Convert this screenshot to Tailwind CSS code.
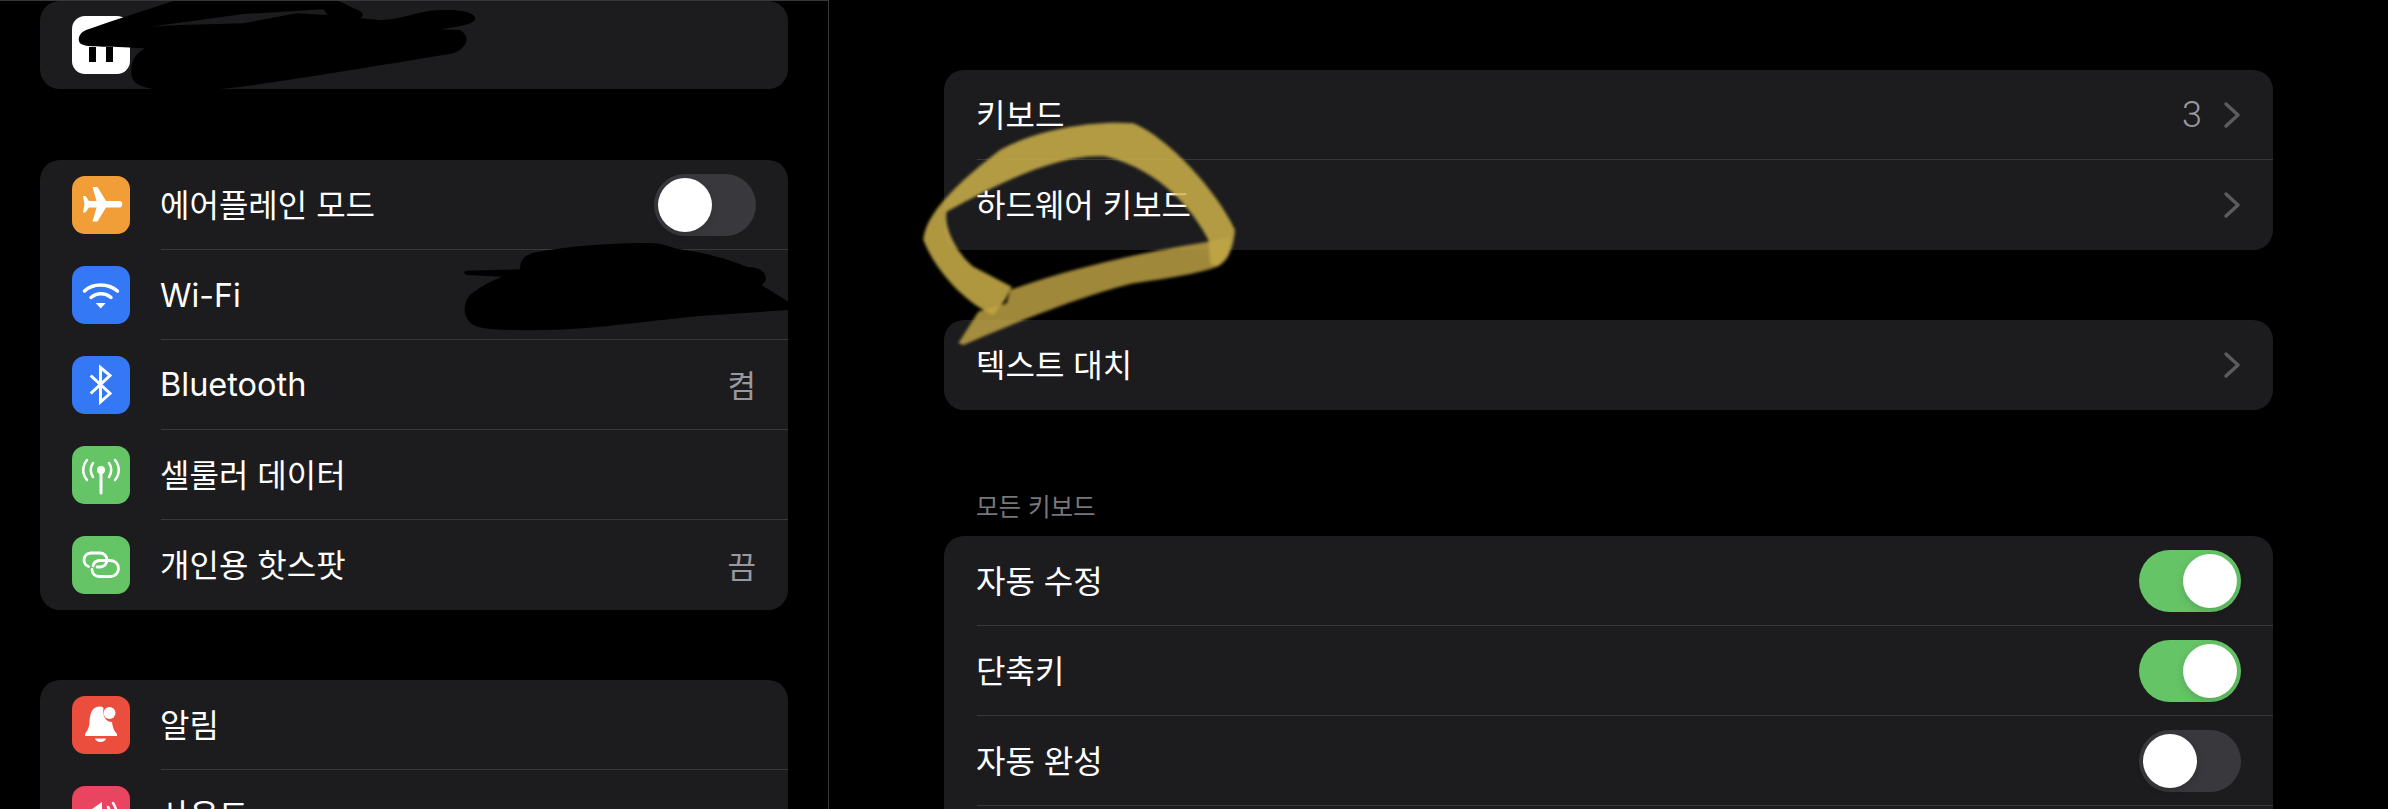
<!DOCTYPE html>
<html lang="ko">
<head>
<meta charset="utf-8">
<title>설정</title>
<script src="https://cdn.jsdelivr.net/npm/@tailwindcss/browser@4"></script>
</head>
<body class="bg-black">
<div class="relative flex w-[2388px] h-[809px] overflow-hidden bg-black text-white text-[32px] leading-none font-['Noto_Sans_CJK_KR','Noto_Sans',sans-serif]">

  <!-- sidebar -->
  <aside class="w-[829px] h-full shrink-0 border-r border-t border-[#38383a] pl-[40px] pr-[40px]">
    <div class="h-[88px] rounded-[20px] bg-[#1c1c1e] flex items-center pl-[32px]">
      <svg class="w-[58px] h-[58px] mt-[-1px]" viewBox="0 0 58 58"><rect width="58" height="58" rx="13" fill="#fff"/><rect x="17" y="31" width="7" height="15" fill="#000"/><rect x="34" y="31" width="7" height="15" fill="#000"/></svg>
    </div>

    <div class="mt-[71px] rounded-[20px] bg-[#1c1c1e] overflow-hidden">
      <div class="h-[90px] flex pl-[32px]">
        <svg class="w-[58px] h-[58px] mt-[16px] shrink-0" viewBox="0 0 58 58"><rect width="58" height="58" rx="13" fill="#f19e39"/><path d="M48 25H34L25.500 11H20.500L24.500 25H17L13.500 20H11L12.500 28.300 11 36.500H13.500L17 31.500H24.500L20.500 45.500H25.500L34 31.500H48C51 31 51 25.500 48 25Z" fill="#fff"/></svg>
        <div class="flex-1 ml-[31px] border-b border-[#38383a] flex items-center justify-between pr-[32px]">
          <span class="-ml-px mb-[4px]">에어플레인 모드</span>
          <div class="w-[102px] h-[62px] rounded-full bg-[#39393d] flex items-center pl-[4px]"><div class="w-[54px] h-[54px] rounded-full bg-white shadow-[0_3px_8px_rgba(0,0,0,0.15)]"></div></div>
        </div>
      </div>
      <div class="h-[90px] flex pl-[32px]">
        <svg class="w-[58px] h-[58px] mt-[16px] shrink-0" viewBox="0 0 58 58"><rect width="58" height="58" rx="13" fill="#3478f6"/><path d="M12.500 25C21 17 36 17 45.500 25" fill="none" stroke="#fff" stroke-width="3.500" stroke-linecap="round"/><path d="M19 31.500C25 26.500 33 26.500 39 31.500" fill="none" stroke="#fff" stroke-width="3.500" stroke-linecap="round"/><path d="M23.700 37H33.700L28.700 42.500Z" fill="#fff"/></svg>
        <div class="flex-1 ml-[31px] border-b border-[#38383a] flex items-center justify-between pr-[32px]">
          <span class="font-['Inter',sans-serif] text-[32px] -ml-px mt-[2px]">Wi-Fi</span>
        </div>
      </div>
      <div class="h-[90px] flex pl-[32px]">
        <svg class="w-[58px] h-[58px] mt-[16px] shrink-0" viewBox="0 0 58 58"><rect width="58" height="58" rx="13" fill="#3478f6"/><path d="M18.700 19.500L38 37.500L28.500 46V11.500L38 19.500L18.700 37.500" fill="none" stroke="#fff" stroke-width="3"/></svg>
        <div class="flex-1 ml-[31px] border-b border-[#38383a] flex items-center justify-between pr-[32px]">
          <span class="font-['Inter',sans-serif] text-[32.5px] -ml-px mt-[2px]">Bluetooth</span>
          <span class="text-[#98989e] text-[31px] mb-[2px]">켬</span>
        </div>
      </div>
      <div class="h-[90px] flex pl-[32px]">
        <svg class="w-[58px] h-[58px] mt-[16px] shrink-0" viewBox="0 0 58 58"><rect width="58" height="58" rx="13" fill="#65c466"/><circle cx="29" cy="24" r="4" fill="#fff"/><path d="M29 25V47" stroke="#fff" stroke-width="3" stroke-linecap="round"/><g fill="none" stroke="#fff" stroke-width="2.500" stroke-linecap="round"><path d="M21 17C18 21 18 27 21 31"/><path d="M37 17C40 21 40 27 37 31"/><path d="M15 14C10 20 10 28 15 34"/><path d="M43 14C48 20 48 28 43 34"/></g></svg>
        <div class="flex-1 ml-[31px] border-b border-[#38383a] flex items-center justify-between pr-[32px]">
          <span class="-ml-px mb-[4px]">셀룰러 데이터</span>
        </div>
      </div>
      <div class="h-[90px] flex pl-[32px]">
        <svg class="w-[58px] h-[58px] mt-[16px] shrink-0" viewBox="0 0 58 58"><rect width="58" height="58" rx="13" fill="#65c466"/><g fill="none" stroke="#fff" stroke-width="2.800" stroke-linecap="round"><path d="M16.500 30.500A7 7 0 0 1 18.500 17H28A7 7 0 0 1 28 31H25"/><path d="M21 30A7 7 0 0 1 27 24.500H38.500A8 8 0 0 1 38.500 40.500H27A7 7 0 0 1 20 33.500"/></g></svg>
        <div class="flex-1 ml-[31px] flex items-center justify-between pr-[32px]">
          <span class="-ml-px mb-[4px]">개인용 핫스팟</span>
          <span class="text-[#98989e] text-[31px] mb-[2px]">끔</span>
        </div>
      </div>
    </div>

    <div class="mt-[70px] rounded-t-[20px] bg-[#1c1c1e] overflow-hidden">
      <div class="h-[90px] flex pl-[32px]">
        <svg class="w-[58px] h-[58px] mt-[16px] shrink-0" viewBox="0 0 58 58"><rect width="58" height="58" rx="13" fill="#eb4e3d"/><path d="M28 10.500C20 10.500 18 17 17.500 26C17 33 15 35 13 38V40H45V38C42 35 40.500 31 40 26C34 26 30 20 31.500 12C30.500 11 29.500 10.500 28 10.500Z" fill="#fff"/><circle cx="37.500" cy="17" r="6" fill="#fff"/><path d="M23 42.500H34C33.500 47 23.500 47 23 42.500Z" fill="#fff"/></svg>
        <div class="flex-1 ml-[31px] border-b border-[#38383a] flex items-center justify-between pr-[32px]">
          <span class="-ml-px mb-[4px]">알림</span>
        </div>
      </div>
      <div class="h-[90px] flex pl-[32px]">
        <svg class="w-[58px] h-[58px] mt-[16px] shrink-0" viewBox="0 0 58 58"><rect width="58" height="58" rx="13" fill="#ea4560"/><path d="M30 16L20 23H14V35H20L30 42Z" fill="#fff"/><path d="M36 21C39 26 39 32 36 37M41 17C46 24 46 34 41 41" fill="none" stroke="#fff" stroke-width="2.500" stroke-linecap="round"/></svg>
        <div class="flex-1 ml-[31px] flex items-center justify-between pr-[32px]">
          <span class="-ml-px mb-[4px]">사운드</span>
        </div>
      </div>
    </div>
  </aside>

  <!-- detail -->
  <main class="flex-1 pl-[115px] pr-[115px] pt-[70px]">
    <div class="rounded-[20px] bg-[#1c1c1e] overflow-hidden">
      <div class="h-[90px] pl-[33px] flex">
        <div class="flex-1 border-b border-[#38383a] flex items-center justify-between pr-[32px]">
          <span class="-ml-px mb-[4px]">키보드</span>
          <div class="flex items-center gap-[21px]">
            <span class="text-[#98989e] text-[36px] font-['Roboto',sans-serif] font-light">3</span>
            <svg class="w-[18px] h-[28px]" viewBox="0 0 18 28"><path d="M3 3L15 14L3 25" fill="none" stroke="#5c5c60" stroke-width="3.500" stroke-linecap="round" stroke-linejoin="round"/></svg>
          </div>
        </div>
      </div>
      <div class="h-[90px] pl-[33px] flex">
        <div class="flex-1 flex items-center justify-between pr-[32px]">
          <span class="-ml-px mb-[4px]">하드웨어 키보드</span>
          <svg class="w-[18px] h-[28px]" viewBox="0 0 18 28"><path d="M3 3L15 14L3 25" fill="none" stroke="#5c5c60" stroke-width="3.500" stroke-linecap="round" stroke-linejoin="round"/></svg>
        </div>
      </div>
    </div>

    <div class="mt-[70px] rounded-[20px] bg-[#1c1c1e]">
      <div class="h-[90px] pl-[33px] pr-[32px] flex items-center justify-between">
        <span class="-ml-px mb-[4px]">텍스트 대치</span>
        <svg class="w-[18px] h-[28px]" viewBox="0 0 18 28"><path d="M3 3L15 14L3 25" fill="none" stroke="#5c5c60" stroke-width="3.500" stroke-linecap="round" stroke-linejoin="round"/></svg>
      </div>
    </div>

    <div class="h-[126px] flex items-end pl-[32px] pb-[18px] text-[24.5px] text-[#77777c]">모든 키보드</div>

    <div class="rounded-t-[20px] bg-[#1c1c1e] overflow-hidden">
      <div class="h-[90px] pl-[33px] flex">
        <div class="flex-1 border-b border-[#38383a] flex items-center justify-between pr-[32px]">
          <span class="-ml-px mb-[4px]">자동 수정</span>
          <div class="w-[102px] h-[62px] rounded-full bg-[#65c466] flex items-center justify-end pr-[4px]"><div class="w-[54px] h-[54px] rounded-full bg-white shadow-[0_3px_8px_rgba(0,0,0,0.15)]"></div></div>
        </div>
      </div>
      <div class="h-[90px] pl-[33px] flex">
        <div class="flex-1 border-b border-[#38383a] flex items-center justify-between pr-[32px]">
          <span class="-ml-px mb-[4px]">단축키</span>
          <div class="w-[102px] h-[62px] rounded-full bg-[#65c466] flex items-center justify-end pr-[4px]"><div class="w-[54px] h-[54px] rounded-full bg-white shadow-[0_3px_8px_rgba(0,0,0,0.15)]"></div></div>
        </div>
      </div>
      <div class="h-[90px] pl-[33px] flex">
        <div class="flex-1 border-b border-[#38383a] flex items-center justify-between pr-[32px]">
          <span class="-ml-px mb-[4px]">자동 완성</span>
          <div class="w-[102px] h-[62px] rounded-full bg-[#39393d] flex items-center pl-[4px]"><div class="w-[54px] h-[54px] rounded-full bg-white shadow-[0_3px_8px_rgba(0,0,0,0.15)]"></div></div>
        </div>
      </div>
      <div class="h-[90px]"></div>
    </div>
  </main>

  <!-- hand-drawn black redaction over the account row -->
  <svg class="absolute left-[30px] top-[1px] w-[460px] h-[89px]" viewBox="0 3 1380 267">
    <path d="M440 0C350 30 250 60 175 88C150 95 140 115 150 130C165 142 210 140 250 140L345 145C310 165 300 190 305 230C315 258 350 268 400 268L560 268C700 255 1000 205 1270 160C1310 145 1325 110 1290 90L1230 88C1290 78 1340 75 1335 50C1320 28 1250 28 1200 32C1150 40 1100 60 1050 60L990 55C1005 45 1000 35 970 25L920 0Z" fill="#000"/>
    <path d="M360 80L640 42L880 28L893 45L800 40L640 70L450 75Z" fill="#1c1c1e"/>
  </svg>
  <!-- hand-drawn black redaction over the Wi-Fi network -->
  <svg class="absolute left-[440px] top-[230px] w-[348px] h-[110px]" viewBox="0 0 1044 330">
    <path d="M80 122L240 118C240 90 255 75 280 68C400 45 560 35 650 40C680 45 700 55 720 58C800 70 860 85 925 112C965 110 985 135 975 155L965 165L1045 215L1045 240L780 258C600 275 450 300 300 300C200 302 130 300 100 285C70 265 65 225 90 195C120 170 150 155 185 140L80 135C70 130 70 125 80 122Z" fill="#000"/>
  </svg>
  <!-- yellow highlighter stroke -->
  <svg class="absolute left-[900px] top-[40px] w-[500px] h-[400px] blur-[1.5px]" viewBox="0 0 1500 1200">
    <path d="M280 825C200 790 110 700 70 600C75 540 130 460 300 330C400 275 560 240 700 250C800 290 950 450 1005 570C1000 630 980 670 950 680L930 670L925 600C880 510 780 390 620 350C500 340 350 400 140 515C130 560 170 640 220 680L335 740L315 780Z" fill="#cdb14a" fill-opacity="0.85"/>
    <path d="M925 605C700 640 500 690 330 750L320 790L235 815L175 910L190 915C300 870 500 780 700 730C800 715 900 700 950 680L985 640L990 590Z" fill="#c2a645" fill-opacity="0.82"/>
  </svg>
</div>
</body>
</html>
